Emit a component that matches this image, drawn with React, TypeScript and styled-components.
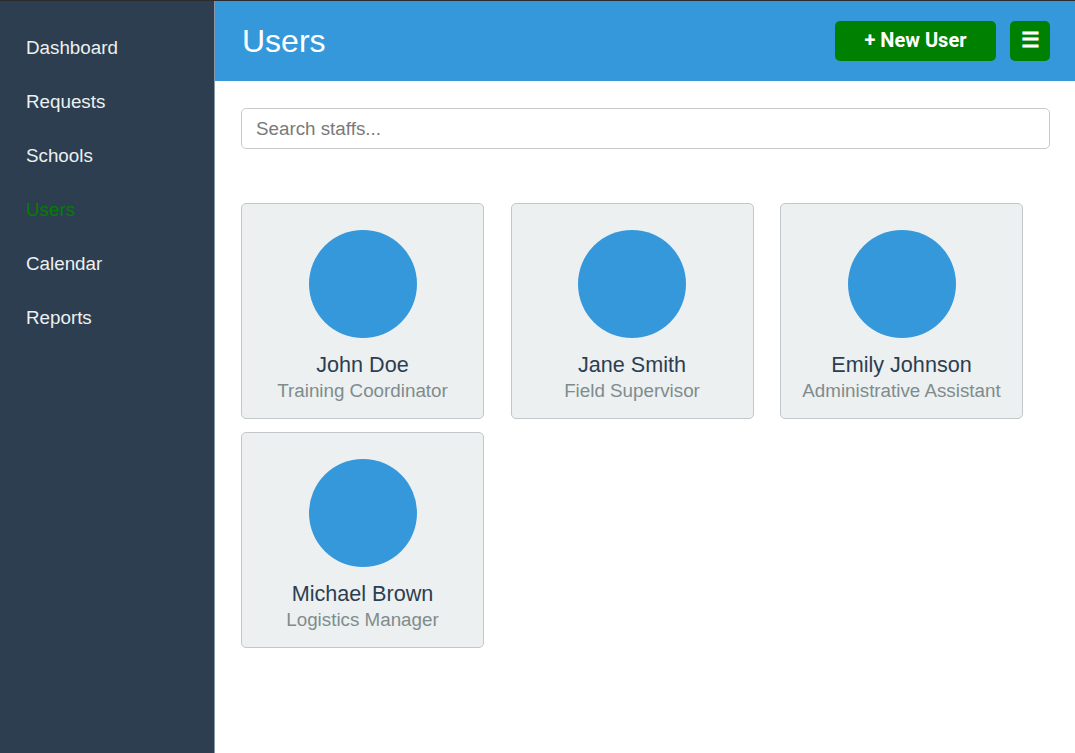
import styled, { createGlobalStyle } from 'styled-components';

const GlobalStyle = createGlobalStyle`
  * { box-sizing: border-box; }
  body {
    margin: 0;
    font-family: "Liberation Sans", Arial, sans-serif;
    border-top: 1px solid #2b2b2b;
    background: #ffffff;
  }
`

const navItems = ['Dashboard', 'Requests', 'Schools', 'Users', 'Calendar', 'Reports']

const users = [
  { name: 'John Doe', role: 'Training Coordinator' },
  { name: 'Jane Smith', role: 'Field Supervisor' },
  { name: 'Emily Johnson', role: 'Administrative Assistant' },
  { name: 'Michael Brown', role: 'Logistics Manager' },
]

function App() {
  return (
    <>
      <GlobalStyle />
      <Layout>
        <Sidebar>
          {navItems.map((item) => (
            <NavItem key={item} $active={item === 'Users'}>{item}</NavItem>
          ))}
        </Sidebar>

        <Main>
          <Header>
            <Title>Users</Title>
            <Actions>
              <NewButton>+ New User</NewButton>
              <MenuButton>☰</MenuButton>
            </Actions>
          </Header>

          <Content>
            <SearchInput placeholder="Search staffs..." />

            <CardGrid>
              {users.map((u) => (
                <Card key={u.name}>
                  <Avatar />
                  <Name>{u.name}</Name>
                  <Role>{u.role}</Role>
                </Card>
              ))}
            </CardGrid>
          </Content>
        </Main>
      </Layout>
    </>
  )
}

export default App

const Layout = styled.div`
  display: flex;
  height: 752px;
`

const Sidebar = styled.nav`
  width: 215px;
  flex-shrink: 0;
  background: #2c3e50;
  padding-top: 36px;
  display: flex;
  flex-direction: column;
  gap: 32px;
  border-right: 1px solid #8a96a3;
`

const NavItem = styled.a<{ $active?: boolean }>`
  padding-left: 26px;
  font-size: 18.8px;
  line-height: 22px;
  color: ${(p) => (p.$active ? '#008000' : '#ecf0f1')};
  text-decoration: none;
  cursor: pointer;
`

const Main = styled.div`
  flex: 1;
  display: flex;
  flex-direction: column;
`

const Header = styled.header`
  height: 80px;
  background: #3498db;
  display: flex;
  align-items: center;
  justify-content: space-between;
  padding: 0 25px 0 27px;
`

const Title = styled.h1`
  margin: 0;
  font-size: 32px;
  font-weight: 400;
  color: #ffffff;
`

const Actions = styled.div`
  display: flex;
  align-items: center;
  gap: 14px;
`

const NewButton = styled.button`
  width: 161px;
  height: 40px;
  background: #008000;
  color: #ffffff;
  border: none;
  border-radius: 5px;
  font-family: Roboto, sans-serif;
  font-weight: 700;
  font-size: 20px;
  padding-bottom: 4px;
  cursor: pointer;
`

const MenuButton = styled(NewButton)`
  width: 40px;
  font-size: 21px;
  padding: 0 0 2px;
`

const Content = styled.div`
  padding: 27px 25px 0 26px;
  display: flex;
  flex-direction: column;
`

const SearchInput = styled.input`
  width: 100%;
  height: 41px;
  border: 1px solid #c8cbce;
  border-radius: 5px;
  padding: 0 14px;
  font-family: "Liberation Sans", Arial, sans-serif;
  font-size: 18.8px;
  color: #333;
  outline: none;

  &::placeholder {
    color: #7a7a7a;
  }
`

const CardGrid = styled.div`
  margin-top: 54px;
  display: grid;
  grid-template-columns: repeat(3, 243px);
  column-gap: 26.5px;
  row-gap: 13px;
`

const Card = styled.div`
  height: 216px;
  background: #ecf0f1;
  border: 1px solid #c3c7c9;
  border-radius: 5px;
  padding-top: 26px;
  display: flex;
  flex-direction: column;
  align-items: center;
`

const Avatar = styled.div`
  width: 108px;
  height: 108px;
  border-radius: 50%;
  background: #3498db;
  margin-bottom: 14px;
`

const Name = styled.div`
  font-size: 21.6px;
  line-height: 26px;
  color: #2c3e50;
`

const Role = styled.div`
  font-size: 18.8px;
  line-height: 26px;
  color: #7f8c8d;
`
